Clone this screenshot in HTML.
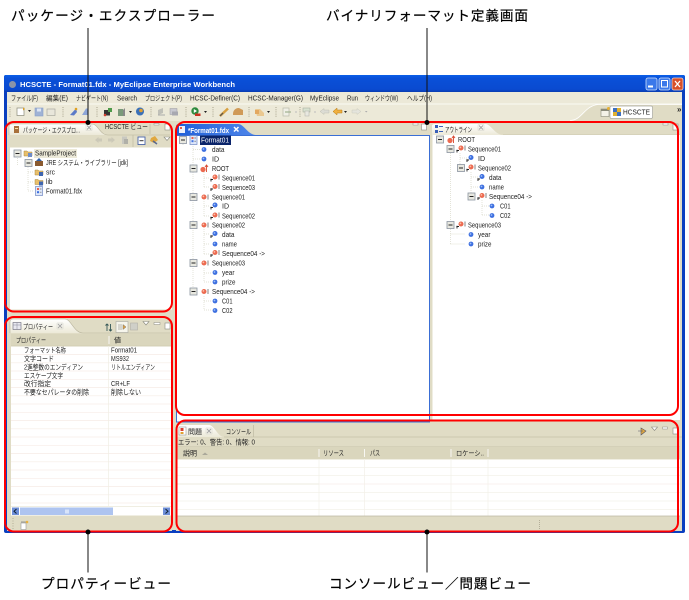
<!DOCTYPE html>
<html lang="ja">
<head>
<meta charset="utf-8">
<title>HCSCTE</title>
<style>
html,body{margin:0;padding:0;background:#fff;width:689px;height:600px;overflow:hidden}
svg{display:block}
text{font-family:"Liberation Sans","Noto Sans CJK JP",sans-serif;font-size:7.1px;fill:#222;white-space:pre}
.lb{font-size:13.6px;fill:#000;stroke:#000;stroke-width:.2px}
.ti{font-size:7.6px;font-weight:bold;fill:#fff}
.win{filter:blur(.25px)}
</style>
</head>
<body>
<svg width="689" height="600" viewBox="0 0 689 600" xmlns="http://www.w3.org/2000/svg">
<defs>
<linearGradient id="tb" x1="0" y1="0" x2="0" y2="1"><stop offset="0" stop-color="#0a5fe8"/><stop offset=".2" stop-color="#0a50d8"/><stop offset=".85" stop-color="#0a4ad0"/><stop offset="1" stop-color="#0a3cb0"/></linearGradient>
<linearGradient id="at" x1="0" y1="0" x2="1" y2="0"><stop offset="0" stop-color="#1f5fd8"/><stop offset="1" stop-color="#4f86ea"/></linearGradient>
<linearGradient id="wt" x1="0" y1="0" x2="0" y2="1"><stop offset="0" stop-color="#fff"/><stop offset="1" stop-color="#ece9d8"/></linearGradient>
<g id="mb"><rect x="-3.5" y="-3.5" width="7" height="7" fill="#e8e8e0" stroke="#8a93a0" stroke-width=".8"/><path d="M-2-0H2" stroke="#222" stroke-width="1"/></g>
<g id="dot"><circle r="2.4" fill="#3d6fe0"/><circle cx="-.5" cy="-.5" r=".9" fill="#9fc0f5"/></g>
<g id="bl"><circle cx="1" cy="-1" r="2.5" fill="#3d6fe0"/><circle cx=".5" cy="-1.5" r=".9" fill="#9fc0f5"/><path d="M-3 3.5V.8M-3.6 1.5H-1" stroke="#222" stroke-width=".9"/></g>
<g id="red"><circle cx="0" cy="0" r="2.5" fill="#ec6a50"/><circle cx="-.6" cy="-.6" r=".9" fill="#f9c0a8"/><path d="M4-2.5V2.5" stroke="#666" stroke-width=".8"/></g>
<g id="rl"><circle cx="1" cy="-1" r="2.5" fill="#ec6a50"/><circle cx=".4" cy="-1.6" r=".9" fill="#f9c0a8"/><path d="M5-3.5V1.5" stroke="#666" stroke-width=".8"/><path d="M-3 3.5V.8M-3.6 1.5H-1" stroke="#222" stroke-width=".9"/></g>
<g id="root"><circle cx="-1" cy="1" r="2.6" fill="#ec6a50"/><path d="M2.5 3.5V-3M1-1.5 2.5-3.5 4-1.5" fill="none" stroke="#d8482f" stroke-width=".9"/></g>
<g id="doc"><rect x="-3.5" y="-4.5" width="7" height="9" fill="#dfe8fa" stroke="#6f88c4" stroke-width=".7"/><rect x="-2" y="-3" width="2" height="2" fill="#e8604a"/><rect x="-2" y=".2" width="2" height="2" fill="#3d6fe0"/><path d="M.8-2H2.5M.8 1.2H2.5" stroke="#666" stroke-width=".7"/></g>
<g id="grip"><path d="M0 0V11" stroke="#a8a48c" stroke-width="1" stroke-dasharray="1 1.2"/></g>
<g id="vm"><path d="M-3-2H3L0 1.5Z" fill="#fff" stroke="#8b8b80" stroke-width=".6"/></g>
<g id="xc"><path d="M-2-2 2 2M2-2-2 2" stroke="#a8a8a8" stroke-width="1"/><path d="M-3-3H3V3H-3Z" fill="none" stroke="#d4d4cc" stroke-width=".5"/></g>
</defs>

<g class="win">
<!-- window -->
<rect x="4" y="75" width="681" height="458" fill="#0a3fc0" rx="2"/>
<rect x="4" y="75" width="681" height="17" fill="url(#tb)" rx="2"/>
<rect x="7" y="92" width="675" height="438" fill="#e0dcc5"/>
<circle cx="12.500" cy="84.500" r="3.500" fill="#8a94a8"/>
<text class="ti" x="20" y="87" textLength="215" lengthAdjust="spacing">HCSCTE - Format01.fdx - MyEclipse Enterprise Workbench</text>
<rect x="646" y="78" width="11" height="12" rx="2" fill="#3a78ea" stroke="#cfe0fa" stroke-width=".8"/><rect x="648" y="85.500" width="5" height="2" fill="#fff"/>
<rect x="659" y="78" width="11" height="12" rx="2" fill="#3a78ea" stroke="#cfe0fa" stroke-width=".8"/><rect x="661.500" y="80.500" width="6" height="6.500" fill="none" stroke="#fff" stroke-width="1"/>
<rect x="672" y="78" width="11" height="12" rx="2" fill="#d8502a" stroke="#f5d0c0" stroke-width=".8"/><path d="M675 81 680 87M680 81 675 87" stroke="#fff" stroke-width="1.300"/>

<!-- menu -->
<rect x="7" y="92" width="675" height="12" fill="#ece9d8"/>
<text x="11" y="100.500" textLength="27" lengthAdjust="spacingAndGlyphs">ファイル(F)</text>
<text x="46" y="100.500" textLength="22" lengthAdjust="spacingAndGlyphs">編集(E)</text>
<text x="76" y="100.500" textLength="32" lengthAdjust="spacingAndGlyphs">ナビゲート(N)</text>
<text x="117" y="100.500" textLength="20" lengthAdjust="spacingAndGlyphs">Search</text>
<text x="145" y="100.500" textLength="37" lengthAdjust="spacingAndGlyphs">プロジェクト(P)</text>
<text x="190" y="100.500" textLength="50" lengthAdjust="spacingAndGlyphs">HCSC-Definer(C)</text>
<text x="248" y="100.500" textLength="55" lengthAdjust="spacingAndGlyphs">HCSC-Manager(G)</text>
<text x="310" y="100.500" textLength="29" lengthAdjust="spacingAndGlyphs">MyEclipse</text>
<text x="347" y="100.500" textLength="11" lengthAdjust="spacingAndGlyphs">Run</text>
<text x="365" y="100.500" textLength="33" lengthAdjust="spacingAndGlyphs">ウィンドウ(W)</text>
<text x="407" y="100.500" textLength="25" lengthAdjust="spacingAndGlyphs">ヘルプ(H)</text>

<!-- toolbar -->
<rect x="7" y="104" width="675" height="17" fill="#ece9d8"/>
<path d="M7 104H682" stroke="#fff" stroke-width=".7"/>
<path d="M570 121C582 121 584 106 598 104.500H682V121Z" fill="#e0dcc5"/>
<path d="M570 120.500C582 120.500 584 106 598 104.500H682" fill="none" stroke="#fff" stroke-width=".8"/>
<use href="#grip" x="10" y="107"/>
<rect x="17" y="108" width="7" height="7.500" fill="#fff" stroke="#8a8a7a" stroke-width=".7"/><path d="M23 107.500l2 1.500-2 1.500" fill="#e0a020"/>
<path d="M28 110H31L29.500 112Z" fill="#222"/>
<rect x="35" y="108" width="8" height="8" fill="#9fb2d5" stroke="#8aa0c8" stroke-width=".6"/><rect x="37" y="108.500" width="4" height="3" fill="#dde6f5"/>
<rect x="47" y="109" width="8" height="6.500" fill="#e8e6da" stroke="#a8a8a0" stroke-width=".7"/>
<use href="#grip" x="63" y="107"/>
<path d="M70 115 76 108.500 77 112 74 115.500Z" fill="#5b7ac8"/><circle cx="76" cy="109" r="1.300" fill="#e0a020"/>
<path d="M82 115 86 108.500H88V115Z" fill="#8ea6d8"/>
<use href="#grip" x="97" y="107"/>
<rect x="104" y="110" width="6" height="5.500" fill="#333"/><rect x="108" y="108" width="4" height="4" fill="#4d9a4a"/><circle cx="105" cy="115" r="1.300" fill="#d04030"/>
<rect x="118" y="109" width="5" height="7" fill="#7a9a7a"/><path d="M123 110 125 108V116H123Z" fill="#888"/>
<path d="M129 111H132L130.500 113Z" fill="#222"/>
<circle cx="140" cy="111.500" r="4" fill="#3a70b8"/><circle cx="141" cy="110.500" r="1.800" fill="#e0a030"/>
<use href="#grip" x="151" y="107"/>
<path d="M158 115V110L163 108V113Z" fill="#c0c0b8"/><path d="M158 115H165" stroke="#aaa" stroke-width="1"/>
<rect x="170" y="108.500" width="7" height="6" fill="#c8c8d0" stroke="#9a9aa0" stroke-width=".5"/><rect x="172" y="111.500" width="6" height="4" fill="#a8a8b0"/>
<use href="#grip" x="186" y="107"/>
<circle cx="195" cy="111" r="3.700" fill="#2d8a3d"/><path d="M193.800 109 197 111 193.800 113Z" fill="#fff"/><rect x="195" y="113.500" width="5.500" height="2.500" fill="#c83020"/>
<path d="M204 111H207L205.500 113Z" fill="#222"/>
<use href="#grip" x="213" y="107"/>
<path d="M220 116 228 108.500" stroke="#d8a040" stroke-width="2.500"/><path d="M220 116 223 113" stroke="#555" stroke-width="1.200"/>
<path d="M233 114C233 109 238 107 240 108.500L243 110V115H233Z" fill="#d09a58"/>
<use href="#grip" x="249" y="107"/>
<path d="M255 109H260L264 113V116H257Z" fill="#eac890"/><path d="M255 110H259V114H255Z" fill="#e3a860"/>
<path d="M267 111H270L268.500 113Z" fill="#222"/>
<use href="#grip" x="276" y="107"/>
<rect x="283" y="108" width="6" height="8" fill="#f0efe6" stroke="#b8b8a8" stroke-width=".7"/><path d="M285 112H291" stroke="#a0b090" stroke-width="1.200"/>
<path d="M295 112H297" stroke="#bbb"/>
<use href="#grip" x="300" y="107"/>
<rect x="303" y="108" width="7" height="4" fill="#d8e2d0" stroke="#a8b0a0" stroke-width=".6"/><rect x="305" y="111" width="4" height="5" fill="#e8e8e0" stroke="#b0b0a8" stroke-width=".5"/>
<path d="M314 112H316" stroke="#bbb"/>
<path d="M320 111.500 324 108.500V110H329V113H324V114.500Z" fill="#dcdcd4" stroke="#b8b8ac" stroke-width=".4"/>
<path d="M333 111.500 337 108V110H342V113H337V115Z" fill="#f0b040" stroke="#b87a10" stroke-width=".5"/>
<path d="M344 111H347L345.500 113Z" fill="#222"/>
<path d="M361 111.500 357 108.500V110H352V113H357V114.500Z" fill="#e4e4dc" stroke="#c4c4b8" stroke-width=".4"/>
<path d="M365 111H367.500L366.200 112.500Z" fill="#aaa"/>
<!-- perspective -->
<rect x="601" y="109" width="8" height="7.500" fill="#f4f2e8" stroke="#8a8a7a" stroke-width=".6"/><path d="M601 109h8v2h-8z" fill="#8a8a7a"/><circle cx="608.500" cy="108.500" r="1.500" fill="#e8b030"/>
<rect x="610" y="106" width="42.500" height="12.500" rx="1.500" fill="#fff" stroke="#a8a8a0" stroke-width=".7"/>
<rect x="613" y="108" width="4" height="4" fill="#3d6fc0"/><rect x="617" y="108" width="4" height="4" fill="#e0b030"/><rect x="613" y="112" width="4" height="4" fill="#e0b030"/><rect x="617" y="112" width="4" height="4" fill="#3d6fc0"/>
<text x="623" y="114.500" textLength="27" lengthAdjust="spacingAndGlyphs">HCSCTE</text>
<text x="677" y="112" style="font-size:8px;font-weight:bold" fill="#222">»</text>

<!-- package view -->
<rect x="7" y="123" width="165" height="188" fill="#e0dcc5"/>
<path d="M9 135V127Q9 124 12 124H92C98 124 100 135 108 135Z" fill="url(#wt)"/>
<path d="M9 135V127Q9 124 12 124H92C98 124 100 135 108 135H170" fill="none" stroke="#b8b49c" stroke-width=".6"/>
<rect x="14" y="126" width="5" height="7" fill="#a8703a"/><rect x="15" y="128" width="3" height="1" fill="#ffe0a0"/>
<text x="23" y="132.500" textLength="57" lengthAdjust="spacingAndGlyphs">パッケージ・エクスプロ...</text>
<use href="#xc" x="89" y="127.500"/>
<text x="105" y="129" textLength="43" lengthAdjust="spacingAndGlyphs">HCSCTE ビュー</text>
<path d="M150 124V134" stroke="#b8b49c" stroke-width=".6"/>
<rect x="154" y="123.500" width="5" height="1.500" fill="#fff" stroke="#8b8b80" stroke-width=".5"/>
<rect x="165" y="124" width="5" height="6" fill="#fff" stroke="#8b8b80" stroke-width=".6"/>
<path d="M95 140 98.500 137V138.500H102V141.500H98.500V143Z" fill="#ccc9b8"/>
<path d="M115 140 111.500 137V138.500H108V141.500H111.500V143Z" fill="#ccc9b8"/>
<path d="M122 136.500H127V144H122Z" fill="#c8c8c0"/><path d="M124 139H128V144H124Z" fill="#b0b0a8"/>
<path d="M133 135V147" stroke="#bdb9a2" stroke-width=".7"/>
<rect x="138" y="137" width="7" height="7.500" fill="#fff" stroke="#4a64a8" stroke-width=".9"/><path d="M139.500 140.700H143.500" stroke="#333" stroke-width="1"/>
<path d="M151 138 155 136 158 140 154 143 150 141Z" fill="#e0a840"/><path d="M153 141l4 3" stroke="#586890" stroke-width="1.500"/>
<use href="#vm" x="167" y="139"/>
<rect x="10" y="147.500" width="162" height="162" fill="#fff"/>
<path d="M17.500 158V166M28 157V191M28 163H31M28 172H33M28 182H33M28 191H33" stroke="#d8d8c8" stroke-width=".7" stroke-dasharray="1 1" fill="none"/>
<use href="#mb" x="17.500" y="153.500"/>
<path d="M24 156V151H27L28 152H32V156Z" fill="#e9bf6a" stroke="#a88840" stroke-width=".5"/><rect x="28" y="153" width="4" height="4" fill="#6e8cc8"/>
<rect x="34" y="149" width="43" height="9" fill="#ece9d8"/>
<text x="35" y="155.500" textLength="41" lengthAdjust="spacingAndGlyphs">SampleProject</text>
<use href="#mb" x="28.500" y="163"/>
<rect x="35" y="161" width="8" height="5" fill="#8a5a30"/><path d="M36 161l3-3 3 3" fill="#3060a8"/>
<text x="46" y="165" textLength="82" lengthAdjust="spacingAndGlyphs">JRE システム・ライブラリー [jdk]</text>
<path d="M35 175V170H38L39 171H43V175Z" fill="#e9bf6a" stroke="#a88840" stroke-width=".5"/><rect x="39" y="172" width="4" height="4" fill="#3f66b0"/>
<text x="46" y="174.500" textLength="9" lengthAdjust="spacingAndGlyphs">src</text>
<path d="M35 184.500V179.500H38L39 180.500H43V184.500Z" fill="#e9bf6a" stroke="#a88840" stroke-width=".5"/><rect x="39" y="181.500" width="4" height="4" fill="#3f66b0"/>
<text x="46" y="184" textLength="6.500" lengthAdjust="spacingAndGlyphs">lib</text>
<use href="#doc" x="39" y="191"/>
<text x="46" y="193.500" textLength="36" lengthAdjust="spacingAndGlyphs">Format01.fdx</text>

<!-- props view -->
<rect x="7" y="317" width="165" height="214" fill="#e0dcc5"/>
<path d="M10 333V322Q10 319 13 319H65C71 319 74 333 83 333Z" fill="url(#wt)"/>
<path d="M10 333V322Q10 319 13 319H65C71 319 74 333 83 333H170" fill="none" stroke="#b8b49c" stroke-width=".6"/>
<rect x="13" y="322.500" width="8" height="7" fill="#e8e8f0" stroke="#667" stroke-width=".6"/><path d="M13 325H21M17 322.500V329.500" stroke="#889" stroke-width=".5"/>
<text x="23" y="329" textLength="30" lengthAdjust="spacingAndGlyphs">プロパティー</text>
<use href="#xc" x="60" y="326"/>
<path d="M107 324V331M105.500 325.500 107 324 108.500 325.500M110.500 324V331M109 329.500 110.500 331 112 329.500" fill="none" stroke="#355" stroke-width=".9"/>
<rect x="116" y="321.500" width="12" height="11" fill="#f6f5ec" stroke="#a8a8a0" stroke-width=".6"/>
<path d="M118 325H122M118 327H122M118 329H122M123 324.500 126 327 123 329.500Z" fill="#e0a040" stroke="#777" stroke-width=".5"/>
<rect x="130.500" y="323" width="7" height="7" fill="#cfcfc8" stroke="#b0b0a8" stroke-width=".6"/>
<use href="#vm" x="146" y="323.500"/>
<rect x="154" y="322.500" width="6" height="2" fill="#fff" stroke="#8b8b80" stroke-width=".5"/>
<rect x="165" y="323" width="5" height="6" fill="#fff" stroke="#8b8b80" stroke-width=".6"/>
<rect x="11" y="334" width="160" height="12" fill="#dad6bd"/>
<path d="M11 346H171" stroke="#c8c4ac" stroke-width=".6"/>
<path d="M109 336V344" stroke="#fff" stroke-width=".8"/>
<text x="16" y="342.500" textLength="30" lengthAdjust="spacingAndGlyphs">プロパティー</text>
<text x="114" y="342.500">値</text>
<rect x="11" y="346.500" width="160" height="160" fill="#fff"/>
<path d="M11 354.500H171M11 362.800H171M11 371H171M11 379.300H171M11 387.500H171M11 395.800H171M11 404H171M11 412.300H171M11 420.500H171M11 428.800H171M11 437H171M11 445.300H171M11 453.500H171M11 461.800H171M11 470H171M11 478.300H171M11 486.500H171M11 494.800H171M11 503H171" stroke="#f6ece6" stroke-width=".7"/>
<path d="M108.500 346V506" stroke="#f0eee4" stroke-width=".7"/>
<text x="24" y="352.500" textLength="42" lengthAdjust="spacingAndGlyphs">フォーマット名称</text>
<text x="111" y="352.500" textLength="26" lengthAdjust="spacingAndGlyphs">Format01</text>
<text x="24" y="360.800" textLength="30" lengthAdjust="spacingAndGlyphs">文字コード</text>
<text x="111" y="360.800" textLength="18" lengthAdjust="spacingAndGlyphs">MS932</text>
<text x="24" y="369.500" textLength="59" lengthAdjust="spacingAndGlyphs">2進整数のエンディアン</text>
<text x="111" y="369.500" textLength="44" lengthAdjust="spacingAndGlyphs">リトルエンディアン</text>
<text x="24" y="377.800" textLength="39" lengthAdjust="spacingAndGlyphs">エスケープ文字</text>
<text x="24" y="386" textLength="27" lengthAdjust="spacingAndGlyphs">改行指定</text>
<text x="111" y="386" textLength="19" lengthAdjust="spacingAndGlyphs">CR+LF</text>
<text x="24" y="394.500" textLength="65" lengthAdjust="spacingAndGlyphs">不要なセパレータの削除</text>
<text x="111" y="394.500" textLength="30" lengthAdjust="spacingAndGlyphs">削除しない</text>
<rect x="11" y="507" width="160" height="8.500" fill="#fff"/>
<rect x="12" y="507.500" width="7" height="7.500" fill="#6f8fd8"/><path d="M16.500 509 14 511.200 16.500 513.500" fill="none" stroke="#123" stroke-width="1"/>
<rect x="20" y="507.500" width="93" height="7.500" fill="#aec4f0"/>
<rect x="65" y="509.500" width="4" height="4" fill="#d8e4fa"/>
<rect x="163" y="507.500" width="7" height="7.500" fill="#6f8fd8"/><path d="M165.500 509 168 511.200 165.500 513.500" fill="none" stroke="#123" stroke-width="1"/>
<path d="M13 518V530" stroke="#a8a48c" stroke-width=".8" stroke-dasharray="1 1.500"/>
<rect x="21" y="523" width="5" height="6.500" fill="#fff" stroke="#999" stroke-width=".6"/><path d="M21 522H27" stroke="#888" stroke-width=".8"/><circle cx="27" cy="522" r="1.300" fill="#e8b040"/>

<!-- editor -->
<rect x="175" y="122" width="507" height="300" fill="#e0dcc5"/>
<path d="M176 136V127Q176 124 179 124H238C244 124 248 135 256 135H176Z" fill="url(#at)"/>
<rect x="176" y="135" width="254" height="287.500" fill="#3a6ed5"/>
<rect x="177" y="136" width="252" height="285.500" fill="#fff"/>
<rect x="179" y="126" width="6" height="7" fill="#eef2fb"/><rect x="180" y="127" width="2" height="2" fill="#e0604a"/>
<text x="188" y="133" style="fill:#fff;font-weight:bold" textLength="41" lengthAdjust="spacingAndGlyphs">*Format01.fdx</text>
<path d="M234 127 238.500 131.500M238.500 127 234 131.500" stroke="#fff" stroke-width="1.500"/>
<rect x="413" y="123" width="5" height="2" fill="#fff" stroke="#8b8b80" stroke-width=".5"/>
<rect x="421.500" y="124" width="5" height="6" fill="#fff" stroke="#8b8b80" stroke-width=".6"/>

<!-- editor tree -->
<path d="M183 144V146M193 144V291M193 149.500H201M193 159H201M204 172V187M204 178H210M204 187H210M204 201V216M204 206H210M204 216H210M204 229V254M204 234H210M204 244H210M204 254H210M204 268V282M204 273H212M204 282H212M204 296V310M204 301H212M204 310H212" stroke="#d8d8c8" stroke-width=".7" stroke-dasharray="1 1" fill="none"/>
<use href="#mb" x="183" y="140"/>
<use href="#doc" x="193.500" y="140"/>
<rect x="200" y="135.500" width="31" height="9.500" fill="#0a246a"/>
<text x="201" y="142.500" style="fill:#fff" textLength="28" lengthAdjust="spacingAndGlyphs">Format01</text>
<use href="#dot" x="204" y="149.500"/><text x="212" y="152" textLength="12.500" lengthAdjust="spacingAndGlyphs">data</text>
<use href="#dot" x="204" y="159"/><text x="212" y="161.500">ID</text>
<use href="#mb" x="193.500" y="168.500"/><use href="#root" x="204" y="168.500"/><text x="212" y="171" textLength="17" lengthAdjust="spacingAndGlyphs">ROOT</text>
<use href="#rl" x="214" y="178"/><text x="222" y="180.500" textLength="33" lengthAdjust="spacingAndGlyphs">Sequence01</text>
<use href="#rl" x="214" y="187.500"/><text x="222" y="190" textLength="33" lengthAdjust="spacingAndGlyphs">Sequence03</text>
<use href="#mb" x="193.500" y="197"/><use href="#red" x="204" y="197"/><text x="212" y="199.500" textLength="33" lengthAdjust="spacingAndGlyphs">Sequence01</text>
<use href="#bl" x="214" y="206"/><text x="222" y="208.500">ID</text>
<use href="#rl" x="214" y="216"/><text x="222" y="218.500" textLength="33" lengthAdjust="spacingAndGlyphs">Sequence02</text>
<use href="#mb" x="193.500" y="225"/><use href="#red" x="204" y="225"/><text x="212" y="227.500" textLength="33" lengthAdjust="spacingAndGlyphs">Sequence02</text>
<use href="#bl" x="214" y="234.500"/><text x="222" y="237" textLength="12.500" lengthAdjust="spacingAndGlyphs">data</text>
<use href="#dot" x="215" y="244"/><text x="222" y="246.500" textLength="15" lengthAdjust="spacingAndGlyphs">name</text>
<use href="#rl" x="214" y="253.500"/><text x="222" y="256" textLength="43" lengthAdjust="spacingAndGlyphs">Sequence04 -&gt;</text>
<use href="#mb" x="193.500" y="263"/><use href="#red" x="204" y="263"/><text x="212" y="265.500" textLength="33" lengthAdjust="spacingAndGlyphs">Sequence03</text>
<use href="#dot" x="215" y="272.500"/><text x="222" y="275" textLength="12.500" lengthAdjust="spacingAndGlyphs">year</text>
<use href="#dot" x="215" y="282"/><text x="222" y="284.500" textLength="13.500" lengthAdjust="spacingAndGlyphs">prize</text>
<use href="#mb" x="193.500" y="291.500"/><use href="#red" x="204" y="291.500"/><text x="212" y="294" textLength="43" lengthAdjust="spacingAndGlyphs">Sequence04 -&gt;</text>
<use href="#dot" x="215" y="301"/><text x="222" y="303.500" textLength="10.500" lengthAdjust="spacingAndGlyphs">C01</text>
<use href="#dot" x="215" y="310.500"/><text x="222" y="313" textLength="10.500" lengthAdjust="spacingAndGlyphs">C02</text>

<!-- outline -->
<path d="M432 135V126Q432 124 435 124H485C491 124 495 135 503 135H432Z" fill="url(#wt)"/>
<path d="M503 135H680" stroke="#b8b49c" stroke-width=".6"/>
<rect x="432.500" y="135" width="247.500" height="285" fill="#fff"/>
<rect x="435" y="125" width="3" height="3" fill="#3a60b8"/><rect x="435" y="130" width="3" height="3" fill="#3a60b8"/><path d="M439 126.500H443M439 131.500H443" stroke="#3a60b8" stroke-width="1"/>
<text x="445" y="132" textLength="27" lengthAdjust="spacingAndGlyphs">アウトライン</text>
<use href="#xc" x="481" y="127.500"/>
<rect x="663" y="123" width="5" height="2" fill="#fff" stroke="#8b8b80" stroke-width=".5"/>
<rect x="673" y="124" width="5" height="6" fill="#fff" stroke="#8b8b80" stroke-width=".6"/>
<path d="M450.500 153V221M450.500 229V244M450.500 234H465M450.500 244H465M460 153V168M460 158H468M471 172V196M471 177H478M471 187H478M482 200V215M482 206H490M482 215H490" stroke="#d8d8c8" stroke-width=".7" stroke-dasharray="1 1" fill="none"/>
<use href="#mb" x="440" y="139.500"/><use href="#root" x="451" y="139.500"/><text x="458" y="142" textLength="17" lengthAdjust="spacingAndGlyphs">ROOT</text>
<use href="#mb" x="450.500" y="149"/><use href="#rl" x="460" y="149"/><text x="468" y="151.500" textLength="33" lengthAdjust="spacingAndGlyphs">Sequence01</text>
<use href="#bl" x="470" y="158.500"/><text x="478" y="161">ID</text>
<use href="#mb" x="461" y="168"/><use href="#rl" x="470" y="168"/><text x="478" y="170.500" textLength="33" lengthAdjust="spacingAndGlyphs">Sequence02</text>
<use href="#bl" x="481" y="177.500"/><text x="489" y="180" textLength="12.500" lengthAdjust="spacingAndGlyphs">data</text>
<use href="#dot" x="482" y="187"/><text x="489" y="189.500" textLength="15" lengthAdjust="spacingAndGlyphs">name</text>
<use href="#mb" x="471.500" y="196.500"/><use href="#rl" x="481" y="196.500"/><text x="489" y="199" textLength="43" lengthAdjust="spacingAndGlyphs">Sequence04 -&gt;</text>
<use href="#dot" x="492" y="206"/><text x="500" y="208.500" textLength="10.500" lengthAdjust="spacingAndGlyphs">C01</text>
<use href="#dot" x="492" y="215.500"/><text x="500" y="218" textLength="10.500" lengthAdjust="spacingAndGlyphs">C02</text>
<use href="#mb" x="450.500" y="225"/><use href="#rl" x="460" y="225"/><text x="468" y="227.500" textLength="33" lengthAdjust="spacingAndGlyphs">Sequence03</text>
<use href="#dot" x="471" y="234.500"/><text x="478" y="237" textLength="12.500" lengthAdjust="spacingAndGlyphs">year</text>
<use href="#dot" x="471" y="244"/><text x="478" y="246.500" textLength="13.500" lengthAdjust="spacingAndGlyphs">prize</text>

<!-- console -->
<rect x="176" y="423" width="506" height="108" fill="#e0dcc5"/>
<path d="M176 437V427Q176 425 179 425H209C214 425 218 437 224 437Z" fill="url(#wt)"/>
<path d="M224 437H682" stroke="#b8b49c" stroke-width=".6"/>
<path d="M253.500 425V437" stroke="#b8b49c" stroke-width=".6"/>
<rect x="179" y="427" width="7" height="8" fill="#fff" stroke="#888" stroke-width=".5"/><rect x="180.500" y="428" width="3" height="3" fill="#d84030"/><rect x="180.500" y="432" width="3" height="2" fill="#e0a030"/>
<text x="188" y="434" textLength="14" lengthAdjust="spacingAndGlyphs">問題</text>
<use href="#xc" x="209" y="431"/>
<text x="226" y="434" textLength="25" lengthAdjust="spacingAndGlyphs">コンソール</text>
<path d="M641 428 646 431 641 435ZM638 431H643" fill="#e0a840" stroke="#556" stroke-width=".6"/>
<use href="#vm" x="654.500" y="429"/>
<rect x="662.500" y="427" width="5" height="2" fill="#fff" stroke="#8b8b80" stroke-width=".5"/>
<rect x="673" y="428" width="5" height="6" fill="#fff" stroke="#8b8b80" stroke-width=".6"/>
<text x="178" y="444.500" textLength="77" lengthAdjust="spacingAndGlyphs">エラー: 0、警告: 0、情報: 0</text>
<path d="M176 446.500H680" stroke="#c8c4ac" stroke-width=".6"/>
<rect x="177" y="447" width="503" height="12" fill="#dad6bd"/>
<path d="M319 449V457M364.500 449V457M451 449V457M488 449V457" stroke="#fff" stroke-width=".8"/>
<text x="183" y="455.500" textLength="14" lengthAdjust="spacingAndGlyphs">説明</text>
<path d="M202 455H208L205 452.500Z" fill="#aaa89a"/>
<text x="323" y="455.500" textLength="21" lengthAdjust="spacingAndGlyphs">リソース</text>
<text x="370" y="455.500" textLength="10" lengthAdjust="spacingAndGlyphs">パス</text>
<text x="456" y="455.500" textLength="28" lengthAdjust="spacingAndGlyphs">ロケーシ..</text>
<rect x="177" y="459.500" width="503" height="56.500" fill="#fff"/>
<path d="M177 467.500H680M177 475.500H680M177 492.500H680M177 501H680M177 509.500H680" stroke="#f4f2ea" stroke-width=".7"/>
<path d="M177 484H319" stroke="#e6e4d4" stroke-width=".7"/><path d="M319 484H680" stroke="#f8ecea" stroke-width=".7"/>
<path d="M319 459V516M364.500 459V516M451 459V516M488 459V516" stroke="#f2f0e8" stroke-width=".7"/>
<path d="M177 516H680" stroke="#bdb9a2" stroke-width=".7"/>
<path d="M539.500 520V530" stroke="#a8a48c" stroke-width=".8" stroke-dasharray="1 1"/>
</g>

<!-- annotations -->
<rect x="5" y="122" width="167" height="189.500" rx="9" fill="none" stroke="#f00" stroke-width="2"/>
<rect x="5" y="317" width="167" height="214.500" rx="9" fill="none" stroke="#f00" stroke-width="2"/>
<rect x="176" y="122" width="502" height="293" rx="9" fill="none" stroke="#f00" stroke-width="2"/>
<rect x="176.500" y="420.500" width="501.500" height="111" rx="9" fill="none" stroke="#f00" stroke-width="2"/>
<path d="M88 28V122M427 28V122M88 532V572.500M427 532V572.500" stroke="#111" stroke-width="1"/>
<circle cx="88" cy="122.500" r="2.500" fill="#000"/>
<circle cx="427" cy="122.500" r="2.500" fill="#000"/>
<circle cx="88" cy="532" r="2.500" fill="#000"/>
<circle cx="427" cy="532" r="2.500" fill="#000"/>
<text class="lb" x="11" y="20.500" textLength="204" lengthAdjust="spacing">パッケージ・エクスプローラー</text>
<text class="lb" x="326" y="20.500" textLength="202" lengthAdjust="spacing">バイナリフォーマット定義画面</text>
<text class="lb" x="41" y="588.500" textLength="130" lengthAdjust="spacing">プロパティービュー</text>
<text class="lb" x="329" y="588.500" textLength="202" lengthAdjust="spacing">コンソールビュー／問題ビュー</text>
</svg>
</body>
</html>
